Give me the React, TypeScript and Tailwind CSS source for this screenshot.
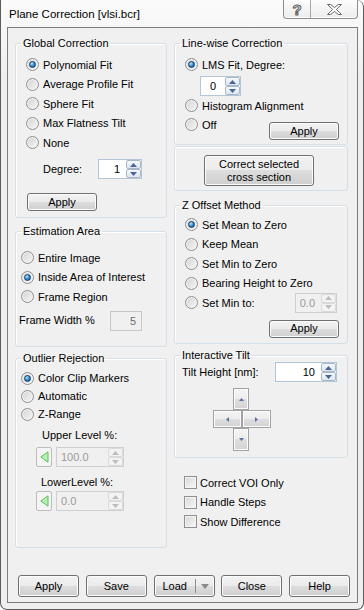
import React from "react"

const btn =
  "border border-[#707070] rounded-[3px] bg-[linear-gradient(#f2f2f2_0%,#ebebeb_50%,#dddddd_50%,#cfcfcf_100%)] shadow-[inset_0_0_0_1px_#fcfcfc] flex items-center justify-center"

function Radio({ label, checked, tall }: { label: string; checked?: boolean; tall?: boolean }) {
  return (
    <div className={`flex items-center ${tall ? "h-[18px]" : "h-[19.5px]"}`}>
      <span className="w-[13px] h-[13px] shrink-0 rounded-full border border-[#8f8f8f] bg-[linear-gradient(135deg,#d2d2d2,#f7f7f7)] shadow-[inset_0_0_0_1px_#f4f4f4] flex items-center justify-center">
        {checked && (
          <span className="w-[7px] h-[7px] rounded-full border border-[#12406e] bg-[radial-gradient(circle_at_35%_30%,#b6e6ff,#2c86c9_55%,#0d3f70)]" />
        )}
      </span>
      <span className="ml-[4px] leading-[14px] whitespace-nowrap">{label}</span>
    </div>
  )
}

function Check({ label }: { label: string }) {
  return (
    <div className="flex items-center h-[19.5px]">
      <span className="w-[13px] h-[13px] shrink-0 border border-[#8f8f8f] bg-[linear-gradient(135deg,#d6d6d6,#f8f8f8)] shadow-[inset_0_0_0_1px_#f5f5f5]" />
      <span className="ml-[3px] leading-[14px]">{label}</span>
    </div>
  )
}

function Arrows({ disabled }: { disabled?: boolean }) {
  const c = disabled ? "#bdbdbd" : "#4a6597"
  const b = disabled
    ? "border-[#dadada] bg-[#f3f3f3]"
    : "border-[#a9b7c9] bg-[linear-gradient(#f5f8fb,#dde6f0)]"
  return (
    <div className="flex flex-col w-[15px] h-full shrink-0">
      <div className={`flex-1 border ${b} rounded-[2px] flex items-center justify-center`}>
        <svg width="7" height="4" viewBox="0 0 7 4"><path d="M0 4L3.5 0L7 4Z" fill={c} /></svg>
      </div>
      <div className={`flex-1 border ${b} rounded-[2px] flex items-center justify-center`}>
        <svg width="7" height="4" viewBox="0 0 7 4"><path d="M0 0L3.5 4L7 0Z" fill={c} /></svg>
      </div>
    </div>
  )
}

function Spin({
  value,
  w,
  disabled,
  left,
  pad,
}: {
  value: string
  w: string
  disabled?: boolean
  left?: boolean
  pad?: string
}) {
  return (
    <div
      className={`${w} h-[20px] flex border ${
        disabled ? "border-[#cfcfcf] bg-[#f0f0f0] text-[#9a9a9a]" : "border-[#b3c5d8] bg-white text-black"
      }`}
    >
      <div className={`flex-1 leading-[18px] ${left ? "text-left pl-[4px]" : "text-right"} ${pad ?? ""}`}>{value}</div>
      <Arrows disabled={disabled} />
    </div>
  )
}

function GreenBtn() {
  return (
    <div className="w-[16px] h-[20px] border border-[#bdbdbd] rounded-[2px] bg-[#f4f4f4] flex items-center justify-center">
      <svg width="9" height="12" viewBox="0 0 9 12">
        <path d="M8 0.8L8 11.2L0.8 6Z" fill="#b5efb5" stroke="#5fbf5f" strokeWidth="1" />
      </svg>
    </div>
  )
}

function Group({ title, h, mt, children }: { title: string; h: string; mt: string; children: React.ReactNode }) {
  return (
    <fieldset className={`${h} ${mt} border border-[#d5dfe5] rounded-[3px] shadow-[inset_1px_1px_0_#ffffff]`}>
      <legend className="ml-[5px] px-[2px] leading-[14px]">{title}</legend>
      {children}
    </fieldset>
  )
}

function PadBtn({ cls, dir }: { cls: string; dir: "u" | "d" | "l" | "r" }) {
  const d = { u: "M0 3L2.5 0L5 3Z", d: "M0 0L2.5 3L5 0Z", l: "M3 0L0 2.5L3 5Z", r: "M0 0L3 2.5L0 5Z" }[dir]
  const vert = dir === "u" || dir === "d"
  return (
    <div
      className={`${cls} border border-[#a3a3a3] bg-[linear-gradient(#f4f4f4_0%,#ececec_50%,#dedede_50%,#d3d3d3_100%)] shadow-[inset_0_0_0_1px_#fbfbfb] flex items-center justify-center`}
    >
      <svg width={vert ? 5 : 3} height={vert ? 3 : 5} viewBox={vert ? "0 0 5 3" : "0 0 3 5"}>
        <path d={d} fill="#5b71a0" />
      </svg>
    </div>
  )
}

export default function App() {
  return (
    <div className="w-[364px] h-[610px] bg-white font-['Liberation_Sans',Arial,sans-serif] text-[11px] text-black">
      <div className="w-full h-full flex flex-col border-x border-b border-[#5c5c5c] rounded-b-[7px] rounded-tr-[7px] bg-[linear-gradient(#fbfbfb,#eeeeee_80px,#efefef)]">
        {/* title bar */}
        <div className="h-[27px] shrink-0 flex items-start justify-between">
          <span className="ml-[8px] mt-[7px] leading-[15px] text-[11.5px]">Plane Correction [vlsi.bcr]</span>
          <div className="mr-[5px] flex h-[19px] border border-t-0 border-[#8d8d8d] rounded-b-[4px] bg-[linear-gradient(#fdfdfd,#ececec)] shadow-[inset_0_-1px_0_#ffffff]">
            <div className="w-[27px] border-r border-[#a8a8a8] flex items-center justify-center">
              <span className="text-[15px] font-bold leading-[15px] text-transparent [-webkit-text-stroke:1px_#5a5a5a]">?</span>
            </div>
            <div className="w-[46px] flex items-center justify-center">
              <svg width="15" height="11" viewBox="0 0 15 11">
                <path
                  d="M0.5 0.5H3.7L7.5 3.6L11.3 0.5H14.5L9.4 5.5L14.5 10.5H11.3L7.5 7.4L3.7 10.5H0.5L5.6 5.5Z"
                  fill="#ffffff"
                  stroke="#666666"
                  strokeWidth="1"
                />
              </svg>
            </div>
          </div>
        </div>

        {/* client area */}
        <div className="ml-[6px] mr-[5px] mb-[6px] flex-1 flex flex-col border border-[#7d7d7d] bg-[#f0f0f0]">
          <div className="flex pl-[7px] gap-[7px]">
            {/* left column */}
            <div className="w-[152px] mt-[8px] flex flex-col">
              <Group title="Global Correction" h="h-[182px]" mt="mt-0">
                <div className="pl-[10px] pt-[5px]">
                  <Radio label="Polynomial Fit" checked />
                  <Radio label="Average Profile Fit" />
                  <Radio label="Sphere Fit" />
                  <Radio label="Max Flatness Tilt" />
                  <Radio label="None" />
                  <div className="flex items-center h-[20px] mt-[6.5px]">
                    <span className="ml-[17px] w-[55px]">Degree:</span>
                    <Spin value="1" w="w-[44px]" pad="pr-[6px]" />
                  </div>
                  <div className={`${btn} ml-[1px] mt-[14px] w-[70px] h-[18px]`}>Apply</div>
                </div>
              </Group>

              <Group title="Estimation Area" h="h-[123px]" mt="mt-[6px]">
                <div className="pl-[5px] pt-[10px]">
                  <Radio label="Entire Image" />
                  <Radio label="Inside Area of Interest" checked />
                  <Radio label="Frame Region" />
                  <div className="flex items-center h-[20px] mt-[4px] -ml-[2px]">
                    <span className="w-[91px]">Frame Width %</span>
                    <div className="w-[32px] h-[20px] border border-[#c6c6c6] bg-[#f0f0f0] text-[#6d6d6d] text-right pr-[5px] leading-[18px]">
                      5
                    </div>
                  </div>
                </div>
              </Group>

              <Group title="Outlier Rejection" h="h-[197px]" mt="mt-[4px]">
                <div className="pl-[5px] pt-[4px]">
                  <Radio label="Color Clip Markers" checked tall />
                  <Radio label="Automatic" tall />
                  <Radio label="Z-Range" tall />
                  <div className="ml-[21px] mt-[4px] h-[16px] leading-[16px]">Upper Level %:</div>
                  <div className="ml-[15px] mt-[4px] flex gap-[4px]">
                    <GreenBtn />
                    <Spin value="100.0" w="w-[68px]" disabled left />
                  </div>
                  <div className="ml-[20px] mt-[7px] h-[16px] leading-[16px]">LowerLevel %:</div>
                  <div className="ml-[15px] mt-[1px] flex gap-[4px]">
                    <GreenBtn />
                    <Spin value="0.0" w="w-[68px]" disabled left />
                  </div>
                </div>
              </Group>
            </div>

            {/* right column */}
            <div className="w-[174px] mt-[8px] flex flex-col">
              <Group title="Line-wise Correction" h="h-[109px]" mt="mt-0">
                <div className="pl-[10px] pr-[8px] pt-[5px]">
                  <Radio label="LMS Fit, Degree:" checked />
                  <div className="ml-[15px] mt-[1.5px]">
                    <Spin value="0" w="w-[41px]" pad="pr-[9px]" />
                  </div>
                  <Radio label="Histogram Alignment" />
                  <div className="flex items-start justify-between">
                    <Radio label="Off" tall />
                    <div className={`${btn} mt-[6.5px] w-[70px] h-[18px]`}>Apply</div>
                  </div>
                </div>
              </Group>

              <div className="mt-[1px] h-[45px] border border-[#d5dfe5] rounded-[3px] shadow-[inset_1px_1px_0_#ffffff] pt-[8px] pl-[29px]">
                <div className={`${btn} w-[110px] h-[31px] flex-col leading-[13px]`}>
                  <span>Correct selected</span>
                  <span>cross section</span>
                </div>
              </div>

              <Group title="Z Offset Method" h="h-[146px]" mt="mt-[7px]">
                <div className="pl-[10px] pr-[8px] pt-[3px]">
                  <Radio label="Set Mean to Zero" checked />
                  <Radio label="Keep Mean" />
                  <Radio label="Set Min to Zero" />
                  <Radio label="Bearing Height to Zero" />
                  <div className="flex items-center justify-between h-[19.5px]">
                    <Radio label="Set Min to:" />
                    <div className="mr-[2px]">
                      <Spin value="0.0" w="w-[42px]" disabled pad="pr-[6px]" />
                    </div>
                  </div>
                  <div className="flex justify-end mt-[7px]">
                    <div className={`${btn} w-[70px] h-[18px]`}>Apply</div>
                  </div>
                </div>
              </Group>

              <Group title="Interactive Tilt" h="h-[110px]" mt="mt-[4px]">
                <div className="pl-[7px] pr-[10px]">
                  <div className="flex items-center justify-between h-[20px]">
                    <span>Tilt Height [nm]:</span>
                    <Spin value="10" w="w-[62px]" pad="pr-[6px]" />
                  </div>
                  <div className="mt-[6px] flex flex-col">
                    <PadBtn cls="ml-[51px] w-[16px] h-[22px]" dir="u" />
                    <div className="flex ml-[31px]">
                      <PadBtn cls="w-[29px] h-[18px]" dir="l" />
                      <PadBtn cls="w-[29px] h-[18px]" dir="r" />
                    </div>
                    <PadBtn cls="ml-[51px] w-[16px] h-[23px]" dir="d" />
                  </div>
                </div>
              </Group>

              <div className="mt-[15px] pl-[10px]">
                <Check label="Correct VOI Only" />
                <Check label="Handle Steps" />
                <Check label="Show Difference" />
              </div>
            </div>
          </div>

          {/* bottom buttons */}
          <div className="mt-auto pb-[5px] pl-[10px] pr-[7px] flex justify-between">
            <div className={`${btn} w-[61px] h-[22px]`}>Apply</div>
            <div className={`${btn} w-[61px] h-[22px]`}>Save</div>
            <div className={`${btn} w-[61px] h-[22px] justify-start`}>
              <span className="ml-[8px] w-[32px]">Load</span>
              <span className="w-px h-[14px] bg-[#8e8e8e]" />
              <svg className="ml-[5px]" width="8" height="5" viewBox="0 0 8 5">
                <path d="M0 0L4 5L8 0Z" fill="#8a8a8a" />
              </svg>
            </div>
            <div className={`${btn} w-[61px] h-[22px]`}>Close</div>
            <div className={`${btn} w-[61px] h-[22px]`}>Help</div>
          </div>
        </div>
      </div>
    </div>
  )
}
